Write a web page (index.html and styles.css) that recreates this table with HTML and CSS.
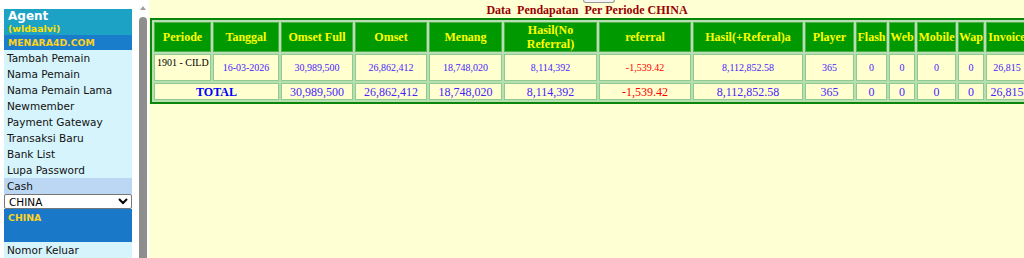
FILE: index.html
```html
<!DOCTYPE html>
<html>
<head>
<meta charset="utf-8">
<title>Data Pendapatan</title>
<link rel="stylesheet" href="styles.css">
</head>
<body>
<div class="frames">
  <aside class="menu-frame">
    <div class="menu">
      <div class="menu-inner">
        <div class="agent">Agent<span class="agent-name">(wldaalvi)</span></div>
        <div class="site">MENARA4D.COM</div>
        <nav class="links">
          <a href="#">Tambah Pemain</a>
          <a href="#">Nama Pemain</a>
          <a href="#">Nama Pemain Lama</a>
          <a href="#">Newmember</a>
          <a href="#">Payment Gateway</a>
          <a href="#">Transaksi Baru</a>
          <a href="#">Bank List</a>
          <a href="#">Lupa Password</a>
          <a href="#" class="active">Cash</a>
        </nav>
        <select class="market-select">
          <option>CHINA</option>
        </select>
        <div class="market">CHINA</div>
        <nav class="links">
          <a href="#">Nomor Keluar</a>
        </nav>
      </div>
    </div>
    <div class="scrollbar">
      <span class="scroll-arrow"></span>
      <span class="scroll-thumb"></span>
    </div>
  </aside>
  <main class="report-frame">
    <div class="top-box"></div>
    <h1 class="title">Data&nbsp; Pendapatan&nbsp; Per Periode CHINA</h1>
    <table class="report">
      <colgroup>
        <col class="c-periode"><col class="c-tanggal"><col class="c-omsetfull"><col class="c-omset">
        <col class="c-menang"><col class="c-hasilno"><col class="c-referral"><col class="c-hasilref">
        <col class="c-player"><col class="c-flash"><col class="c-web"><col class="c-mobile">
        <col class="c-wap"><col class="c-invoice">
      </colgroup>
      <tr class="head">
        <th>Periode</th><th>Tanggal</th><th>Omset Full</th><th>Omset</th><th>Menang</th>
        <th>Hasil(No Referral)</th><th>referral</th><th>Hasil(+Referal)a</th><th>Player</th>
        <th>Flash</th><th>Web</th><th>Mobile</th><th>Wap</th><th>Invoice</th>
      </tr>
      <tr class="data">
        <td class="periode">1901 - CILD</td>
        <td>16-03-2026</td><td>30,989,500</td><td>26,862,412</td><td>18,748,020</td>
        <td>8,114,392</td><td class="neg">-1,539.42</td><td>8,112,852.58</td><td>365</td>
        <td>0</td><td>0</td><td>0</td><td>0</td><td>26,815</td>
      </tr>
      <tr class="total">
        <td colspan="2" class="total-label">TOTAL</td>
        <td>30,989,500</td><td>26,862,412</td><td>18,748,020</td>
        <td>8,114,392</td><td class="neg">-1,539.42</td><td>8,112,852.58</td><td>365</td>
        <td>0</td><td>0</td><td>0</td><td>0</td><td>26,815</td>
      </tr>
    </table>
  </main>
</div>
</body>
</html>
```

FILE: styles.css
```css
html, body {
  margin: 0;
  padding: 0;
  background: #ffffff;
  overflow: hidden;
}

.frames {
  display: flex;
  width: 1024px;
  height: 258px;
}

/* ---------- left frame ---------- */
.menu-frame {
  width: 149px;
  flex: none;
  display: flex;
  background: #ffffff;
  overflow: hidden;
}

.menu {
  width: 134px;
  flex: none;
  padding: 9px 2px 0 4px;
  box-sizing: border-box;
  font-family: "DejaVu Sans", Verdana, sans-serif;
}

.menu-inner {
  background: #d6f4fc;
  height: 100%;
}

.agent {
  background: #1ca2c4;
  color: #ffffff;
  height: 26px;
  box-sizing: border-box;
  padding: 1px 4px 0 4px;
  font-weight: bold;
  font-size: 12px;
  line-height: 13px;
}

.agent-name {
  display: block;
  color: #ffe000;
  font-size: 9.4px;
  line-height: 11px;
}

.site {
  background: #1a7dcb;
  color: #ffd21c;
  height: 15px;
  line-height: 15px;
  padding-left: 4px;
  font-weight: bold;
  font-size: 9.3px;
}

.links a {
  display: block;
  height: 16px;
  line-height: 16px;
  padding-left: 3px;
  font-size: 10.5px;
  color: #111111;
  text-decoration: none;
  white-space: nowrap;
}

.links a.active {
  background: #bcd7f3;
}

.market-select {
  display: block;
  width: 128px;
  height: 15px;
  margin: 0;
  padding: 0;
  font-family: "DejaVu Sans", Verdana, sans-serif;
  font-size: 10.5px;
  color: #000;
  background: #ffffff;
  border: 1px solid #767676;
  border-radius: 2px;
}

.market {
  background: #1a78c8;
  color: #ffd21c;
  height: 33px;
  box-sizing: border-box;
  padding: 3px 4px 0 4px;
  font-weight: bold;
  font-size: 9.4px;
  line-height: 11px;
}

.scrollbar {
  width: 15px;
  flex: none;
  display: flex;
  flex-direction: column;
  align-items: flex-start;
  background: #ffffff;
  padding-top: 6px;
  box-sizing: border-box;
}

.scroll-arrow {
  width: 0;
  height: 0;
  margin-left: 6px;
  border-left: 3px solid transparent;
  border-right: 3px solid transparent;
  border-bottom: 4px solid #a0a0a0;
}

.scroll-thumb {
  margin-top: 7px;
  margin-left: 5px;
  width: 8px;
  flex: 1;
  background: #8e8e8e;
  border-radius: 4px 4px 0 0;
}

/* ---------- right frame ---------- */
.report-frame {
  flex: 1;
  min-width: 0;
  background: #ffffd4;
  overflow: hidden;
  padding: 0 0 0 1px;
}

.top-box {
  width: 30px;
  height: 2px;
  margin: 0 0 0 433px;
  border: 1px solid #9a9a9a;
  border-top: none;
  border-radius: 0 0 3px 3px;
  background: #f4f4f4;
}

.title {
  margin: 0 0 0 0;
  text-align: center;
  font-family: "Liberation Serif", "Times New Roman", serif;
  font-weight: bold;
  font-size: 12px;
  line-height: 15px;
  color: #990000;
}

.report {
  table-layout: fixed;
  width: 882px;
  border: 2px solid #0a860a;
  border-spacing: 2px;
  background: #b8dfb2;
  font-family: "Liberation Serif", "Times New Roman", serif;
}

.c-periode { width: 57px; }
.c-tanggal { width: 66px; }
.c-omsetfull { width: 72px; }
.c-omset { width: 72px; }
.c-menang { width: 73px; }
.c-hasilno { width: 93px; }
.c-referral { width: 92px; }
.c-hasilref { width: 110px; }
.c-player { width: 49px; }
.c-flash { width: 31px; }
.c-web { width: 26px; }
.c-mobile { width: 39px; }
.c-wap { width: 26px; }
.c-invoice { width: 42px; }

.report th,
.report td {
  box-sizing: border-box;
  padding: 0;
  text-align: center;
  vertical-align: middle;
  white-space: normal;
}

.head th {
  height: 30px;
  background: #009900;
  border: 1px solid #4fb04f;
  color: #ffff00;
  font-weight: bold;
  font-size: 12px;
  line-height: 14px;
}

.data td {
  height: 27px;
  background: #ffffd0;
  border: 1px solid #8fcb8f;
  color: #4a24ff;
  font-size: 10px;
  line-height: 12px;
}

.data td.periode {
  vertical-align: top;
  text-align: left;
  padding: 2px 0 0 2px;
  color: #000000;
  white-space: nowrap;
}

.total td {
  height: 17px;
  background: #ffffd0;
  border: 1px solid #8fcb8f;
  color: #4a24ff;
  font-size: 12px;
  line-height: 14px;
}

.report td.neg {
  color: #ff0000;
}

.total td.total-label {
  color: #0000ff;
  font-weight: bold;
}
```
